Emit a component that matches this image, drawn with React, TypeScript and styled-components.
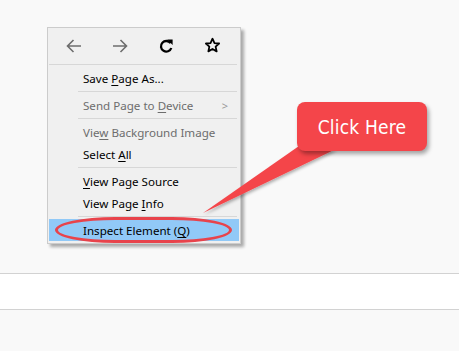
import React from 'react';
import styled, { createGlobalStyle } from 'styled-components';

const GlobalStyle = createGlobalStyle`
  html, body {
    margin: 0;
    padding: 0;
    background: #f9f9f9;
  }
`;

const Page = styled.div`
  position: relative;
  width: 459px;
  height: 351px;
  overflow: hidden;
  background: #f9f9f9;
  padding-top: 273px;
  box-sizing: border-box;
`;

const WhiteBand = styled.div`
  height: 35px;
  background: #ffffff;
  border-top: 1px solid #d2d2d2;
  border-bottom: 1px solid #d2d2d2;
`;

const Menu = styled.div`
  position: absolute;
  left: 47px;
  top: 27px;
  width: 190px;
  padding: 1px 1px 2px 1px;
  background: #f0f0f0;
  border: 1px solid #cccccc;
  box-shadow: 3px 3px 3px rgba(0, 0, 0, 0.32);
  font-family: 'Noto Sans', 'Open Sans', sans-serif;
  font-size: 11.6px;
  color: #000;
`;

const NavRow = styled.div`
  display: grid;
  grid-template-columns: repeat(4, 46px);
  height: 33px;
  padding-left: 2px;
  align-items: center;
`;

const NavButton = styled.div`
  display: flex;
  align-items: center;
  justify-content: center;
  height: 100%;
`;

const Separator = styled.div<{ $full?: boolean }>`
  height: 1px;
  background: #d7d7d7;
  margin: 2px 2px 2px ${(p) => (p.$full ? '0' : '29px')};
`;

const Item = styled.div<{ $disabled?: boolean; $active?: boolean }>`
  display: flex;
  align-items: center;
  justify-content: space-between;
  height: 22px;
  padding: 0 11px 0 34px;
  color: ${(p) => (p.$disabled ? '#6d6d6d' : '#000')};
  background: ${(p) => (p.$active ? '#91c9f7' : 'transparent')};
  white-space: nowrap;
`;

const Key = styled.span`
  text-decoration: underline;
  text-underline-offset: 2px;
`;

const SubArrow = styled.span`
  color: #9a9a9a;
  font-size: 11px;
`;

const Ring = styled.div`
  position: absolute;
  left: 55px;
  top: 217px;
  width: 171px;
  height: 20px;
  border: 3px solid #e8434b;
  border-radius: 60px / 13px;
`;

const Tail = styled.svg`
  position: absolute;
  left: 0;
  top: 0;
  overflow: visible;
`;

const Bubble = styled.div`
  position: absolute;
  left: 297px;
  top: 102px;
  width: 130px;
  height: 49px;
  display: flex;
  align-items: center;
  justify-content: center;
  background: #f4454a;
  border-radius: 8px;
  box-shadow: 2px 3px 4px rgba(0, 0, 0, 0.35);
  color: #ffffff;
  font-family: 'DejaVu Sans Condensed', 'DejaVu Sans', sans-serif;
  font-stretch: condensed;
  font-weight: 300;
  font-size: 19px;
  letter-spacing: 0.2px;
`;

const BackIcon = ({ flip }: { flip?: boolean }) => (
  <svg width="18" height="18" viewBox="0 0 18 18" style={flip ? { transform: 'scaleX(-1)' } : undefined}>
    <path d="M16 9H2.5M8.5 3L2.5 9l6 6" fill="none" stroke="#6d6d6d" strokeWidth="1.6" />
  </svg>
);

const ReloadIcon = () => (
  <svg width="16" height="16" viewBox="0 0 16 16">
    <path d="M12.6 5.2A5.3 5.3 0 1 0 13.3 10" fill="none" stroke="#000" strokeWidth="2.3" />
    <polygon points="9.2,1.6 14.6,1.6 14.6,7" fill="#000" />
  </svg>
);

const StarIcon = () => (
  <svg width="17" height="17" viewBox="0 0 18 18">
    <polygon
      points="9,1.8 11.1,6.4 16,6.9 12.3,10.2 13.4,15.2 9,12.6 4.6,15.2 5.7,10.2 2,6.9 6.9,6.4"
      fill="none"
      stroke="#000"
      strokeWidth="1.9"
      strokeLinejoin="round"
    />
  </svg>
);

const App = () => {
  return (
    <>
      <GlobalStyle />
      <Page>
        <WhiteBand />
        <Menu>
          <NavRow>
            <NavButton><BackIcon /></NavButton>
            <NavButton><BackIcon flip /></NavButton>
            <NavButton><ReloadIcon /></NavButton>
            <NavButton><StarIcon /></NavButton>
          </NavRow>
          <Separator $full />
          <Item>
            <span>Save <Key>P</Key>age As...</span>
          </Item>
          <Separator />
          <Item $disabled>
            <span>Send Page to <Key>D</Key>evice</span>
            <SubArrow>&gt;</SubArrow>
          </Item>
          <Separator />
          <Item $disabled>
            <span>Vie<Key>w</Key> Background Image</span>
          </Item>
          <Item>
            <span>Select <Key>A</Key>ll</span>
          </Item>
          <Separator />
          <Item>
            <span><Key>V</Key>iew Page Source</span>
          </Item>
          <Item>
            <span>View Page <Key>I</Key>nfo</span>
          </Item>
          <Separator />
          <Item $active>
            <span>Inspect Element (<Key>Q</Key>)</span>
          </Item>
        </Menu>
        <Ring />
        <Tail width="459" height="351">
          <defs>
            <filter id="sh" x="-20%" y="-20%" width="140%" height="140%">
              <feDropShadow dx="1" dy="2" stdDeviation="1.5" floodColor="#000" floodOpacity="0.3" />
            </filter>
          </defs>
          <polygon points="299,146 336,149 203,213" fill="#f4454a" filter="url(#sh)" />
        </Tail>
        <Bubble>Click Here</Bubble>
      </Page>
    </>
  );
};

export default App;
